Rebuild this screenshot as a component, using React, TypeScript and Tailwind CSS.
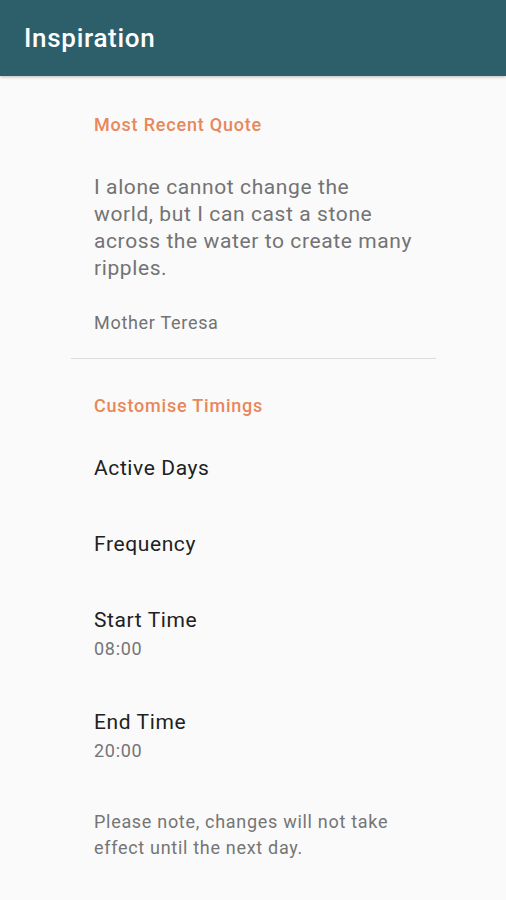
export default function App() {
  const font = { fontFamily: "Roboto, 'Noto Sans', sans-serif" };

  return (
    <div className="min-h-[900px] w-full bg-[#fafafa]" style={font}>
      <header className="flex h-[76px] items-center bg-[#2d5f6b] px-6 shadow-[0_1px_3px_rgba(0,0,0,0.25)]">
        <h1 className="text-[26px] font-medium tracking-[0.7px] text-white">Inspiration</h1>
      </header>

      <main className="pl-[71px] pr-[70px]">
        <section className="pl-[23px] pt-[36px]">
          <p className="text-[18px] leading-[26px] font-medium tracking-[0.8px] text-[#e8875a]">
            Most Recent Quote
          </p>
          <p className="mt-[36px] whitespace-nowrap text-[21px] leading-[27px] tracking-[0.6px] text-[#737373]">
            I alone cannot change the
            <br />
            world, but I can cast a stone
            <br />
            across the water to create many
            <br />
            ripples.
          </p>
          <p className="mt-[29px] text-[18px] leading-[24px] tracking-[0.7px] text-[#737373]">
            Mother Teresa
          </p>
        </section>

        <hr className="mt-[23px] border-t border-[#dcdcdc]" />

        <section className="pl-[23px] pt-[34px]">
          <p className="text-[18px] leading-[26px] font-medium tracking-[0.8px] text-[#e8875a]">
            Customise Timings
          </p>

          <div className="mt-[36px] flex flex-col">
            <p className="text-[21px] leading-[26px] tracking-[0.6px] text-[#212121]">Active Days</p>
            <p className="mt-[50px] text-[21px] leading-[26px] tracking-[0.6px] text-[#212121]">Frequency</p>
            <div className="mt-[50px]">
              <p className="text-[21px] leading-[26px] tracking-[0.6px] text-[#212121]">Start Time</p>
              <p className="mt-[4px] text-[18px] leading-[24px] tracking-[0.7px] text-[#757575]">08:00</p>
            </div>
            <div className="mt-[48px]">
              <p className="text-[21px] leading-[26px] tracking-[0.6px] text-[#212121]">End Time</p>
              <p className="mt-[4px] text-[18px] leading-[24px] tracking-[0.7px] text-[#757575]">20:00</p>
            </div>
          </div>

          <p className="mt-[46px] max-w-[310px] text-[18px] leading-[26px] tracking-[0.7px] text-[#757575]">
            Please note, changes will not take effect until the next day.
          </p>
        </section>
      </main>
    </div>
  );
}
